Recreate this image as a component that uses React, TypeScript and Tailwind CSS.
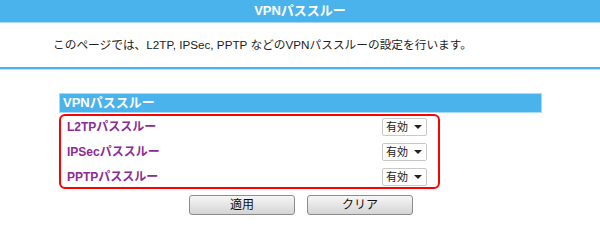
import React from "react";

const font = { fontFamily: '"Liberation Sans", "Noto Sans CJK JP", sans-serif' };

const rows = ["L2TPパススルー", "IPSecパススルー", "PPTPパススルー"];

function Select() {
  return (
    <div className="flex h-[18px] w-[45px] items-center justify-between rounded-[2px] border border-[#c9c9c9] bg-white pl-[3px] pr-[4px] text-[11px] text-[#222]">
      <span>有効</span>
      <span className="h-0 w-0 border-x-[4px] border-t-[4px] border-x-transparent border-t-[#222]" />
    </div>
  );
}

export default function App() {
  return (
    <div className="h-[248px] w-[600px] bg-white" style={font}>
      <div className="flex h-[23px] items-center justify-center border-b border-[#a6d8f6] bg-[#4ab3ec] text-[13px] font-bold text-white">
        VPNパススルー
      </div>
      <div className="flex h-[44px] items-center pl-[53px] text-[11.7px] text-[#222]">
        このページでは、L2TP, IPSec, PPTP などのVPNパススルーの設定を行います。
      </div>
      <div className="h-[3px] border-b border-[#b5e0f8] bg-[#4ab3ec]" />

      <div className="ml-[59px] mt-[23px] w-[483px]">
        <div className="flex h-[20px] items-center border border-[#a9dbf7] bg-[#4ab3ec] pl-[3px] text-[13px] font-bold text-white">
          VPNパススルー
        </div>
        <div className="mt-px flex h-[75px] w-[381px] flex-col gap-[7px] rounded-[6px] border-2 border-[#ff0000] pb-px pl-[6px] pr-[11px] pt-[2px]">
          {rows.map((r) => (
            <div key={r} className="flex h-[18px] items-center justify-between">
              <span className="text-[12px] font-bold text-[#8e2a96]">{r}</span>
              <Select />
            </div>
          ))}
        </div>
      </div>

      <div className="ml-[189px] mt-[6px] flex gap-[12px]">
        {["適用", "クリア"].map((b) => (
          <button
            key={b}
            className="flex h-[20px] w-[106px] items-center justify-center rounded-[3px] border border-[#8c8c8c] bg-gradient-to-b from-[#f7f7f7] to-[#d4d4d4] text-[12px] text-[#111]"
          >
            {b}
          </button>
        ))}
      </div>
    </div>
  );
}
